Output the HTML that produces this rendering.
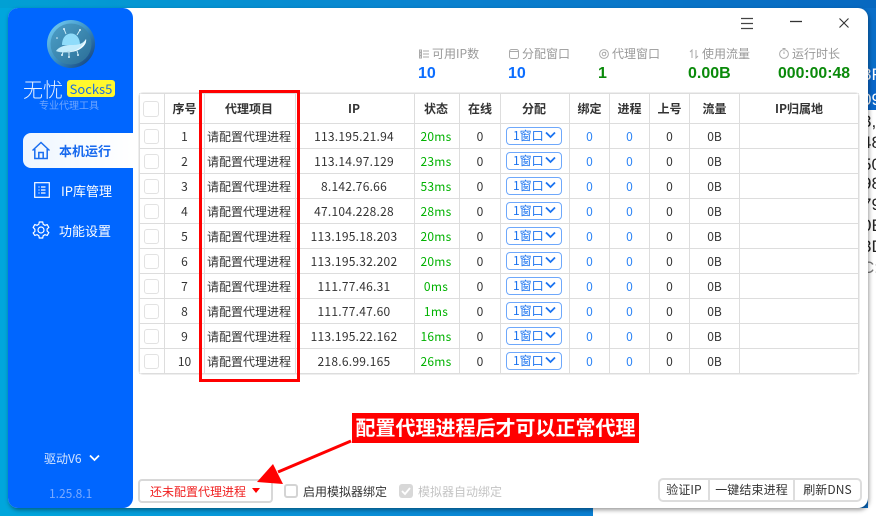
<!DOCTYPE html>
<html lang="zh"><head><meta charset="utf-8"><title>无忧Socks5</title>
<style>
*{box-sizing:border-box}
html,body{margin:0;padding:0}
body{width:876px;height:516px;position:relative;overflow:hidden;font-family:"Noto Sans CJK SC","Liberation Sans",sans-serif;font-size:12px;color:#333;
background:linear-gradient(90deg,#00a6dc 0,#0a93d8 300px,#0a7fd2 590px,#0a6ec8 876px)}
.t{position:absolute;white-space:nowrap;line-height:16px}
#top{position:absolute;left:0;top:0;width:876px;height:8px;background:linear-gradient(90deg,#01a0d4,#0a82cf 50%,#0768c0)}
#rw{position:absolute;left:868px;top:68px;width:8px;height:448px;background:#fff;overflow:hidden;font:17px/20px "Liberation Sans",sans-serif;color:#222}
#rw i{position:absolute;left:-6px;font-style:normal}
#bw{position:absolute;left:593px;top:508px;width:283px;height:8px;background:#fff}
#win{position:absolute;left:8px;top:8px;width:860px;height:500px;background:#fff;border-radius:10px;box-shadow:1px 2px 4px rgba(0,0,0,.4)}
#side{position:absolute;left:8px;top:8px;width:125px;height:500px;background:#0066ff;border-radius:10px}
table{position:absolute;left:139px;top:93px;width:720px;border-collapse:collapse;table-layout:fixed;background:#fff;outline:1px solid #eee;border-radius:4px}
td,th{border:1px solid #ddd;padding:2px 0 0;text-align:center;height:25px;font-size:12px;line-height:16px;font-weight:400;color:#333;white-space:nowrap;overflow:hidden}
th{height:30px;font-weight:700;color:#333;padding:0}
td:nth-child(3),th:nth-child(3),td:nth-child(4),th:nth-child(4),td:nth-child(5),th:nth-child(5),td:nth-child(7),th:nth-child(7){padding-right:2px}
td:nth-child(4),td:nth-child(5){letter-spacing:.25px}
.cb{display:inline-block;width:15px;height:15px;border:1.5px solid #e2e2e2;border-radius:3px;vertical-align:middle;background:#fff;margin-left:-2px;position:relative;top:-1.5px}
th .cb{width:16px;height:16px;top:0}
.g{color:#00b200}.b{color:#2d84f5}
.sel{display:inline-block;width:56px;height:18px;border:1.5px solid #6ea8fb;border-radius:4px;color:#1a73f0;font-size:12px;line-height:15px;text-align:left;padding-left:6px;position:relative;vertical-align:middle;top:-1px;letter-spacing:0}
.sel svg{position:absolute;right:5px;top:3px}
.lab{position:absolute;top:46px;color:#999;font-size:12px;line-height:16px;white-space:nowrap}
.lab svg{vertical-align:-1px;margin-right:3px}
.val{position:absolute;top:65px;font-size:16px;line-height:18px;font-weight:700;font-family:"Liberation Sans",sans-serif}
.nav{position:absolute;color:#fff;font-size:13px;line-height:18px;white-space:nowrap}
.btn{position:absolute;top:478px;height:24px;border:2px solid #ddd;line-height:20px;text-align:center;font-size:12px;color:#333;background:#fff;letter-spacing:.1px}
</style></head><body>
<div id="top"></div>
<div id="rw">
<div style="position:absolute;left:0;top:0;width:8px;height:42px;background:#0a66c8"></div>
<i style="top:-3px;color:#fff">3F</i><i style="top:22px;color:#fff">09</i><i style="top:44px">3,</i><i style="top:65px">48</i><i style="top:87px">50</i><i style="top:106px">98</i><i style="top:127px">79</i><i style="top:148px">0E</i><i style="top:169px">3D</i><i style="top:190px;color:#777">C:</i>
</div>
<div id="bw"></div>
<div id="win"></div>

<div id="side"></div>
<svg style="position:absolute;left:47px;top:20px" width="48" height="48" viewBox="0 0 48 48">
<defs>
<linearGradient id="lg" x1="0" y1="0" x2="1" y2="1"><stop offset="0" stop-color="#7fd6f8"/><stop offset=".5" stop-color="#3a90c4"/><stop offset="1" stop-color="#0f3570"/></linearGradient>
<linearGradient id="lf" x1="0" y1="0" x2="1" y2="1"><stop offset="0" stop-color="#4d9fc8"/><stop offset=".5" stop-color="#3c88b0"/><stop offset="1" stop-color="#2a6c96"/></linearGradient>
</defs>
<circle cx="24" cy="24" r="24" fill="url(#lg)"/>
<circle cx="24" cy="24" r="20.5" fill="url(#lf)"/>
<path d="M15 25c0-7 4-11.500 9-11.500s9 4 9 11.500z" fill="#8fdcfa"/>
<path d="M9 31c2-3 7-6 14-6s12 0 16-6c1 5-4 10-10 11.500s-15 2.500-20 .5z" fill="#c2ecfc"/>
<path d="M9 31c5 2 14 1.500 20-1 4-1.500 8-6 10-11 1 5-4 10-10 12s-16 2-20 0z" fill="#f2fbff"/>
<g stroke="#cdeefb" stroke-width="1" fill="none"><path d="M19 14l-2-5M30 15l3-5M22 32v4M30 31l1 3M16 32l-1 3"/></g>
<g fill="#e2f6fe"><circle cx="17" cy="9" r="1"/><circle cx="33" cy="10" r="1"/><circle cx="22" cy="37" r="1"/><circle cx="31" cy="35" r="1"/><circle cx="15" cy="35" r="1"/><circle cx="10" cy="18" r=".8"/></g>
</svg>
<div class="t" style="left:23px;top:77px;font-size:20px;line-height:24px;color:#e6f0ff;font-weight:300">无忧</div>
<div class="t" style="left:67px;top:80px;width:48px;height:17px;background:#fff82e;border-radius:3px;color:#1d6de0;font-size:13px;line-height:17px;text-align:center">Socks5</div>
<div class="t" style="left:39px;top:97px;font-size:10px;line-height:16px;color:#6ea6ff">专业代理工具</div>

<div style="position:absolute;left:23px;top:133px;width:110px;height:35px;border-radius:8px 0 0 8px;background:linear-gradient(90deg,#eef6ff,#fff)"></div>
<svg style="position:absolute;left:31px;top:141px" width="20" height="19" viewBox="0 0 20 19" fill="none" stroke="#1a6ef0" stroke-width="1.500"><path d="M1.500 9.500L10 1.500l8.500 8M3.800 8v9.500h12.400V8M7.800 17.500v-6h4.400v6"/></svg>
<div class="nav" style="left:59px;top:142px;color:#1769ee;font-weight:700">本机运行</div>
<svg style="position:absolute;left:34px;top:182px" width="16" height="16" viewBox="0 0 16 16" fill="none" stroke="#fff" stroke-width="1.200"><rect x=".7" y=".7" width="14.600" height="14.600"/><path d="M7 5h4.500M7 8h4.500M7 11h4.500M4.500 5h1M4.500 8h1M4.500 11h1"/></svg>
<div class="nav" style="left:61px;top:182px">IP库管理</div>
<svg style="position:absolute;left:32px;top:221px" width="18" height="18" viewBox="0 0 18 18" fill="none" stroke="#fff" stroke-width="1.200"><circle cx="9" cy="9" r="3"/><path d="M7.300 1h3.400l.5 2.300 1.700 1 2.300-.7 1.600 2.800-1.700 1.600v2l1.700 1.600-1.600 2.800-2.300-.7-1.700 1-.5 2.300H7.300l-.5-2.300-1.700-1-2.300.7L1.200 12l1.700-1.600v-2L1.200 6.400l1.600-2.800 2.300.7 1.700-1z"/></svg>
<div class="nav" style="left:59px;top:222px">功能设置</div>
<div class="t" style="left:44px;top:451px;color:#d5e5ff">驱动V6</div>
<svg style="position:absolute;left:89px;top:454px" width="11" height="8" viewBox="0 0 11 8" fill="none" stroke="#fff" stroke-width="1.800"><path d="M1 1.500l4.500 4.500 4.500-4.500"/></svg>
<div class="t" style="left:49px;top:486px;color:#79aaff">1.25.8.1</div>

<svg style="position:absolute;left:740px;top:17px" width="14" height="13" viewBox="0 0 14 13" stroke="#444" stroke-width="1.300"><path d="M1 1.500h12M1 6.500h12M1 11.500h12"/></svg>
<svg style="position:absolute;left:790px;top:20px" width="12" height="3" stroke="#333" stroke-width="1.300"><path d="M0 1.500h12"/></svg>
<svg style="position:absolute;left:838px;top:17px" width="12" height="12" viewBox="0 0 12 12" stroke="#333" stroke-width="1.100"><path d="M1.500 1.500l9 9M10.500 1.500l-9 9"/></svg>

<div class="lab" style="left:419px"><svg width="10" height="10" viewBox="0 0 10 10" fill="none" stroke="#aaa"><path d="M.5 1h2v2h-2zM.5 4h2v2h-2zM.5 7h2v2h-2zM4 2h6M4 5h6M4 8h6"/></svg>可用IP数</div>
<div class="lab" style="left:509px"><svg width="10" height="10" viewBox="0 0 10 10" fill="none" stroke="#aaa"><rect x=".5" y=".5" width="9" height="9" rx="2"/><path d="M1 2.500h8"/></svg>分配窗口</div>
<div class="lab" style="left:599px"><svg width="10" height="10" viewBox="0 0 10 10" fill="none" stroke="#aaa"><circle cx="5" cy="5" r="4.400"/><circle cx="5" cy="5" r="1.800"/><path d="M7 3l-1 1"/></svg>代理窗口</div>
<div class="lab" style="left:689px"><svg width="10" height="10" viewBox="0 0 10 10" fill="none" stroke="#aaa"><path d="M3 9V1L1 3M7 1v8l2-2"/></svg>使用流量</div>
<div class="lab" style="left:779px"><svg width="10" height="11" viewBox="0 0 10 11" fill="none" stroke="#aaa"><circle cx="5" cy="6" r="4.400"/><path d="M3.500.5h3M5 3.500V6"/></svg>运行时长</div>
<div class="val" style="left:418px;color:#0b6dff">10</div>
<div class="val" style="left:508px;color:#0b6dff">10</div>
<div class="val" style="left:598px;color:#0a8a0a">1</div>
<div class="val" style="left:688px;color:#0a8a0a">0.00B</div>
<div class="val" style="left:778px;color:#0a8a0a;font-size:15.8px">000:00:48</div>

<table><colgroup><col style="width:25px"><col style="width:40px"><col style="width:91px"><col style="width:119px"><col style="width:45px"><col style="width:41px"><col style="width:69px"><col style="width:40px"><col style="width:40px"><col style="width:40px"><col style="width:50px"><col></colgroup>
<tr><th><span class="cb"></span></th><th>序号</th><th>代理项目</th><th>IP</th><th>状态</th><th>在线</th><th>分配</th><th>绑定</th><th>进程</th><th>上号</th><th>流量</th><th>IP归属地</th></tr>
<tr><td><span class="cb"></span></td><td>1</td><td>请配置代理进程</td><td>113.195.21.94</td><td class="g">20ms</td><td>0</td><td><span class="sel">1窗口<svg width="11" height="8" viewBox="0 0 11 8" fill="none" stroke="#1a73f0" stroke-width="1.800"><path d="M1 1.500l4.500 4.500 4.500-4.500"/></svg></span></td><td class="b">0</td><td class="b">0</td><td>0</td><td>0B</td><td></td></tr>
<tr><td><span class="cb"></span></td><td>2</td><td>请配置代理进程</td><td>113.14.97.129</td><td class="g">23ms</td><td>0</td><td><span class="sel">1窗口<svg width="11" height="8" viewBox="0 0 11 8" fill="none" stroke="#1a73f0" stroke-width="1.800"><path d="M1 1.500l4.500 4.500 4.500-4.500"/></svg></span></td><td class="b">0</td><td class="b">0</td><td>0</td><td>0B</td><td></td></tr>
<tr><td><span class="cb"></span></td><td>3</td><td>请配置代理进程</td><td>8.142.76.66</td><td class="g">53ms</td><td>0</td><td><span class="sel">1窗口<svg width="11" height="8" viewBox="0 0 11 8" fill="none" stroke="#1a73f0" stroke-width="1.800"><path d="M1 1.500l4.500 4.500 4.500-4.500"/></svg></span></td><td class="b">0</td><td class="b">0</td><td>0</td><td>0B</td><td></td></tr>
<tr><td><span class="cb"></span></td><td>4</td><td>请配置代理进程</td><td>47.104.228.28</td><td class="g">28ms</td><td>0</td><td><span class="sel">1窗口<svg width="11" height="8" viewBox="0 0 11 8" fill="none" stroke="#1a73f0" stroke-width="1.800"><path d="M1 1.500l4.500 4.500 4.500-4.500"/></svg></span></td><td class="b">0</td><td class="b">0</td><td>0</td><td>0B</td><td></td></tr>
<tr><td><span class="cb"></span></td><td>5</td><td>请配置代理进程</td><td>113.195.18.203</td><td class="g">20ms</td><td>0</td><td><span class="sel">1窗口<svg width="11" height="8" viewBox="0 0 11 8" fill="none" stroke="#1a73f0" stroke-width="1.800"><path d="M1 1.500l4.500 4.500 4.500-4.500"/></svg></span></td><td class="b">0</td><td class="b">0</td><td>0</td><td>0B</td><td></td></tr>
<tr><td><span class="cb"></span></td><td>6</td><td>请配置代理进程</td><td>113.195.32.202</td><td class="g">20ms</td><td>0</td><td><span class="sel">1窗口<svg width="11" height="8" viewBox="0 0 11 8" fill="none" stroke="#1a73f0" stroke-width="1.800"><path d="M1 1.500l4.500 4.500 4.500-4.500"/></svg></span></td><td class="b">0</td><td class="b">0</td><td>0</td><td>0B</td><td></td></tr>
<tr><td><span class="cb"></span></td><td>7</td><td>请配置代理进程</td><td>111.77.46.31</td><td class="g">0ms</td><td>0</td><td><span class="sel">1窗口<svg width="11" height="8" viewBox="0 0 11 8" fill="none" stroke="#1a73f0" stroke-width="1.800"><path d="M1 1.500l4.500 4.500 4.500-4.500"/></svg></span></td><td class="b">0</td><td class="b">0</td><td>0</td><td>0B</td><td></td></tr>
<tr><td><span class="cb"></span></td><td>8</td><td>请配置代理进程</td><td>111.77.47.60</td><td class="g">1ms</td><td>0</td><td><span class="sel">1窗口<svg width="11" height="8" viewBox="0 0 11 8" fill="none" stroke="#1a73f0" stroke-width="1.800"><path d="M1 1.500l4.500 4.500 4.500-4.500"/></svg></span></td><td class="b">0</td><td class="b">0</td><td>0</td><td>0B</td><td></td></tr>
<tr><td><span class="cb"></span></td><td>9</td><td>请配置代理进程</td><td>113.195.22.162</td><td class="g">16ms</td><td>0</td><td><span class="sel">1窗口<svg width="11" height="8" viewBox="0 0 11 8" fill="none" stroke="#1a73f0" stroke-width="1.800"><path d="M1 1.500l4.500 4.500 4.500-4.500"/></svg></span></td><td class="b">0</td><td class="b">0</td><td>0</td><td>0B</td><td></td></tr>
<tr><td><span class="cb"></span></td><td>10</td><td>请配置代理进程</td><td>218.6.99.165</td><td class="g">26ms</td><td>0</td><td><span class="sel">1窗口<svg width="11" height="8" viewBox="0 0 11 8" fill="none" stroke="#1a73f0" stroke-width="1.800"><path d="M1 1.500l4.500 4.500 4.500-4.500"/></svg></span></td><td class="b">0</td><td class="b">0</td><td>0</td><td>0B</td><td></td></tr>
</table>

<div style="position:absolute;left:199px;top:90px;width:101px;height:292px;border:3px solid #f00"></div>

<div class="t" style="left:352px;top:413px;width:287px;height:30px;background:#f00;color:#fff;font-size:20px;line-height:27px;font-weight:700;text-align:center">配置代理进程后才可以正常代理</div>

<div style="position:absolute;left:138px;top:479px;width:135px;height:24px;border:2px solid #d8d8d8;border-radius:4px"></div>
<div class="t" style="left:150px;top:484px;color:#f02020">还未配置代理进程</div>
<svg style="position:absolute;left:252px;top:488px" width="9" height="6"><path d="M0 0h8L4 5z" fill="#f00"/></svg>

<svg style="position:absolute;left:250px;top:435px" width="110" height="55" viewBox="0 0 110 55"><path d="M101 6L28 37" stroke="#f00" stroke-width="3" fill="none"/><path d="M7 47L23 29 33 49z" fill="#f00"/></svg>

<span style="position:absolute;left:284px;top:484px;width:14px;height:14px;border:2px solid #d4d4d4;border-radius:3px;background:#fff"></span>
<div class="t" style="left:303px;top:484px;color:#333">启用模拟器绑定</div>
<span style="position:absolute;left:399px;top:484px;width:14px;height:14px;border-radius:3px;background:#d8d8d8"></span>
<svg style="position:absolute;left:400px;top:485px" width="12" height="12" viewBox="0 0 12 12" fill="none" stroke="#fff" stroke-width="1.800"><path d="M2 6l3 3 5-6"/></svg>
<div class="t" style="left:418px;top:484px;color:#c4c4c4">模拟器自动绑定</div>

<div class="btn" style="left:658px;width:52px;border-radius:5px 0 0 5px">验证IP</div>
<div class="btn" style="left:708px;width:87px;border-radius:0">一键结束进程</div>
<div class="btn" style="left:793px;width:69px;border-radius:0 5px 5px 0">刷新DNS</div>
</body></html>
